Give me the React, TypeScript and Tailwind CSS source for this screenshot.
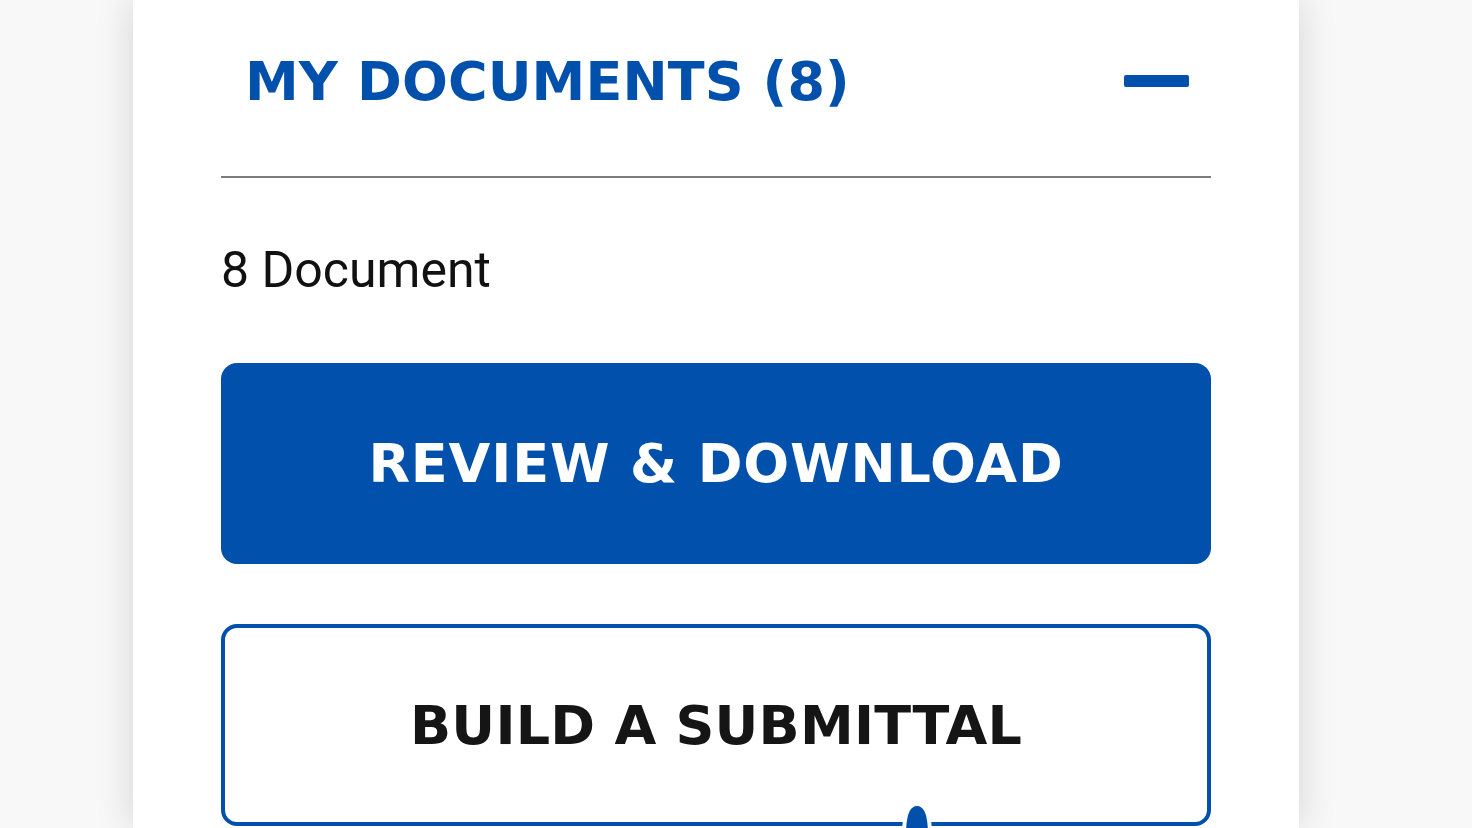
import React from 'react';

const BLUE = '#0050ac';
const HEADING_FONT = '"DejaVu Sans", "Liberation Sans", sans-serif';

function PointerCursor() {
    // Tip of the hand cursor resting on the lower button
    return (
        <svg width="36" height="32" viewBox="0 0 36 32" className="absolute left-[899px] top-[799px]">
            <path
                d="M5 36 C5 17 9 5 18 5 C27 5 31 17 31 36 Z"
                fill={BLUE}
                stroke="#ffffff"
                strokeWidth="4"
            />
        </svg>
    );
}

export default function App() {
    return (
        <div className="relative h-[828px] w-[1472px] overflow-hidden bg-[#f8f8f8]">
            <div className="ml-[133px] h-full w-[1166px] bg-white px-[88px] shadow-[0_0_36px_rgba(0,0,0,0.15)]">
                <div className="flex h-[162px] items-center justify-between pl-6 pr-[22px]">
                    <h2
                        className="text-[54px] font-bold tracking-[0.002em] text-[#0050ac]"
                        style={{ fontFamily: HEADING_FONT }}
                    >
                        MY DOCUMENTS (8)
                    </h2>
                    <span className="block h-[12px] w-[65px] rounded-[2px] bg-[#0050ac]" />
                </div>
                <div className="mt-[14px] h-[2px] bg-[#7d7d7d]" />
                <p
                    className="mt-[60px] text-[50px] leading-[64px] text-[#111]"
                    style={{ fontFamily: 'Roboto, "Liberation Sans", sans-serif' }}
                >
                    8 Document
                </p>
                <button
                    className="mt-[61px] flex h-[201px] w-full items-center justify-center rounded-[16px] bg-[#0050ac] text-[54px] font-bold tracking-[0.016em] text-white"
                    style={{ fontFamily: HEADING_FONT }}
                >
                    REVIEW &amp; DOWNLOAD
                </button>
                <button
                    className="mt-[60px] flex h-[202px] w-full items-center justify-center rounded-[16px] border-4 border-[#0050ac] bg-white text-[54px] font-bold tracking-[0.004em] text-[#151515]"
                    style={{ fontFamily: HEADING_FONT }}
                >
                    BUILD A SUBMITTAL
                </button>
            </div>
            <PointerCursor />
        </div>
    );
}
